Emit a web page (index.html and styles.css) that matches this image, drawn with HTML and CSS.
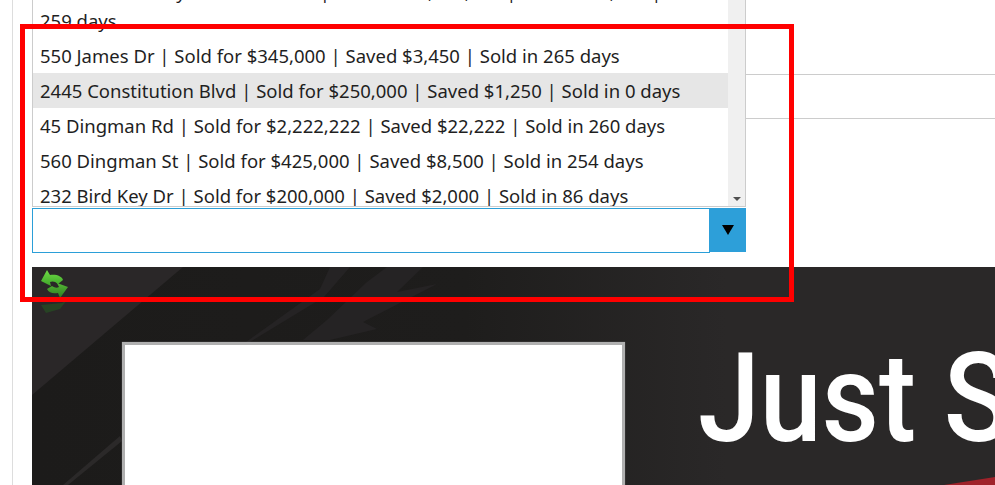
FILE: index.html
```html
<!DOCTYPE html>
<html lang="en">
<head>
<meta charset="UTF-8">
<title>Sold listings</title>
<link rel="stylesheet" href="styles.css">
</head>
<body>
<div class="page">
    <div class="top-row">
        <div class="list-box">
            <ul class="list">
                <li class="item"><span class="first-line">1640 Harbor Bay Shoreline Blvd | Sold for $1,500,000 | Saved $15,000 | Sold in</span>259 days</li>
                <li class="item">550 James Dr | Sold for $345,000 | Saved $3,450 | Sold in 265 days</li>
                <li class="item selected">2445 Constitution Blvd | Sold for $250,000 | Saved $1,250 | Sold in 0 days</li>
                <li class="item">45 Dingman Rd | Sold for $2,222,222 | Saved $22,222 | Sold in 260 days</li>
                <li class="item">560 Dingman St | Sold for $425,000 | Saved $8,500 | Sold in 254 days</li>
                <li class="item">232 Bird Key Dr | Sold for $200,000 | Saved $2,000 | Sold in 86 days</li>
            </ul>
            <div class="scrollbar"><span class="scroll-arrow"></span></div>
        </div>
        <div class="side-lines">
            <div class="side-line"></div>
            <div class="side-line"></div>
        </div>
    </div>

    <div class="combo">
        <div class="combo-input"></div>
        <div class="combo-button"><span class="combo-arrow"></span></div>
    </div>

    <div class="banner">
        <svg class="banner-art" width="963" height="218" viewBox="0 0 963 218">
            <defs>
                <linearGradient id="arrowTop" x1="0" y1="0" x2="0" y2="1">
                    <stop offset="0" stop-color="#6fdc45"/>
                    <stop offset="1" stop-color="#3fa52a"/>
                </linearGradient>
                <linearGradient id="arrowBottom" x1="0" y1="0" x2="0" y2="1">
                    <stop offset="0" stop-color="#55b835"/>
                    <stop offset="1" stop-color="#2a7a20"/>
                </linearGradient>
            </defs>
            <polygon points="0,0 151,0 0,128" fill="#2a2728"/>
            <polygon points="298,0 318,0 292,30 218,75 214,75 288,22" fill="#252324"/>
            <polygon points="355,0 391,0 365,25 405,17 331,55 345,62 298,73 271,73 295,53 335,15" fill="#252324"/>
            <polygon points="88,169 31,218 36,218 90,174" fill="#2b2929"/>
            <polygon points="912,218 963,210 963,218" fill="#a0222a"/>
            <g class="refresh-icon">
                <path d="M9 14 L15 3 L18 8 C24 7 30 9 31 13 L26 17 C23 14 20 14 18 15 L19 19 Z" fill="url(#arrowTop)"/>
                <path d="M36 20 L28 31 L26 26 C21 27 17 26 15 22 L20 19 C23 21 25 21 27 20 L25 16 Z" fill="url(#arrowBottom)"/>
                <path d="M9 38 L30 36 L35 33 L28 42 L14 46 Z" fill="#245f20" opacity="0.5"/>
            </g>
        </svg>
        <div class="white-box"></div>
        <div class="banner-title">Just S</div>
    </div>

    <div class="red-frame"></div>
</div>
</body>
</html>
```

FILE: styles.css
```css
html, body {
    margin: 0;
    height: 100%;
    overflow: hidden;
    background-color: #fff;
}

.page {
    position: relative;
    height: 485px;
    margin-left: 12px;
    padding-left: 19px;
    border-left: 1px solid #ddd;
    font-family: "Noto Sans", sans-serif;
    color: #1f1f1f;
    overflow: hidden;
}

.top-row {
    display: flex;
    height: 207px;
}

/* list with its scrollbar, scrolled part way down */
.list-box {
    display: flex;
    width: 712px;
    border: 1px solid #ccc;
    border-top: none;
    overflow: hidden;
}
.list {
    flex: 1;
    margin: -26px 0 0;
    padding: 0;
    list-style: none;
    font-size: 18.5px;
}
.item {
    padding: 4px 0 4px 7px;
    line-height: 27px;
    white-space: nowrap;
}
.first-line {
    display: block;
    margin-bottom: 2px;
}
.item.selected {
    background-color: #e6e6e6;
}
.scrollbar {
    position: relative;
    width: 17px;
    background-color: #f0f0f0;
}
.scroll-arrow {
    position: absolute;
    left: 5px;
    bottom: 5px;
    border-left: 4px solid transparent;
    border-right: 4px solid transparent;
    border-top: 4px solid #505050;
}

.side-lines {
    flex: 1;
    padding-top: 74px;
}
.side-line {
    height: 43px;
    border-top: 1px solid #ccc;
}

.combo {
    display: flex;
    width: 714px;
    height: 45px;
    margin-top: 1px;
}
.combo-input {
    flex: 1;
    border: 1px solid #2b9fd8;
    background-color: #fff;
}
.combo-button {
    display: flex;
    align-items: center;
    justify-content: center;
    width: 37px;
    height: 44px;
    margin-left: -1px;
    background-color: #2d9fd9;
}
.combo-arrow {
    border-left: 6px solid transparent;
    border-right: 6px solid transparent;
    border-top: 10px solid #000;
}

.banner {
    position: relative;
    display: flex;
    align-items: flex-start;
    height: 218px;
    margin-top: 14px;
    padding: 75px 0 0 90px;
    box-sizing: border-box;
    background: linear-gradient(90deg, #1c1b1a 0%, #1e1d1c 45%, #2a2828 72%, #2a2828 100%);
    overflow: hidden;
}
.banner-art {
    position: absolute;
    left: 0;
    top: 0;
}
.refresh-icon {
    filter: blur(0.5px);
}
.white-box {
    position: relative;
    flex: none;
    width: 497px;
    height: 200px;
    background-color: #fff;
    border: 3px solid #b0b0b0;
    border-bottom: none;
    box-shadow: 0 0 1px #777;
}
.banner-title {
    position: relative;
    flex: none;
    margin: -18px 0 0 73px;
    font-family: Roboto, sans-serif;
    font-size: 125px;
    font-weight: 500;
    line-height: 150px;
    color: #fff;
    white-space: nowrap;
    transform: scaleX(0.89);
    transform-origin: left top;
}

.red-frame {
    position: absolute;
    left: 7px;
    top: 24px;
    width: 764px;
    height: 268px;
    border: 5px solid #f00;
}
```
